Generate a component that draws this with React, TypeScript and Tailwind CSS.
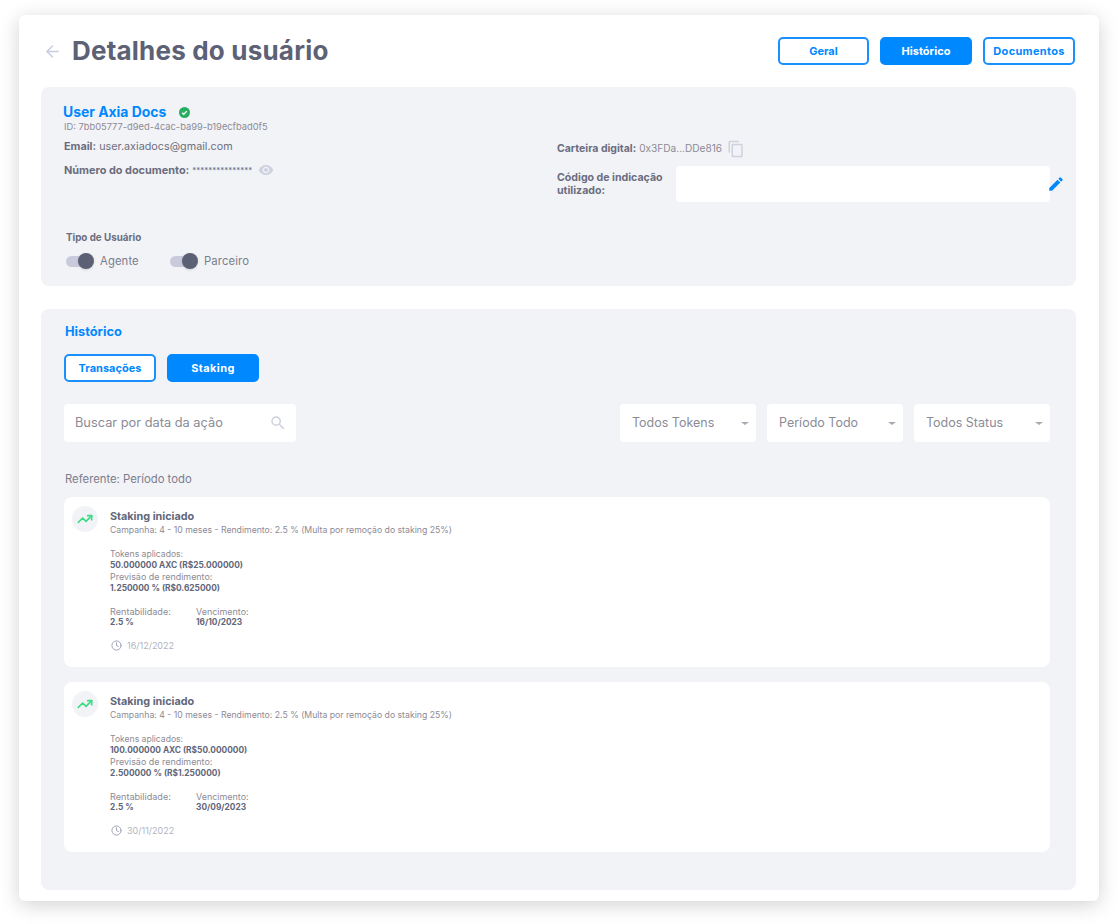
import React from "react";
import { ArrowLeft, Clock, TrendingUp } from "lucide-react";

const font = { fontFamily: '"Inter", "Noto Sans", sans-serif' };

function Btn({ label, active, w, size }: { label: string; active?: boolean; w: string; size: string }) {
  return (
    <button
      className={
        "h-[28px] rounded-[5px] border-2 border-[#1a90ff] text-[11px] font-bold flex items-center justify-center " +
        w +
        " " +
        size +
        " " +
        (active ? "bg-[#0088ff] text-white border-[#0088ff]" : "bg-white text-[#0088ff]")
      }
    >
      {label}
    </button>
  );
}

function Toggle({ label, w }: { label: string; w: string }) {
  return (
    <div className={"flex items-center " + w}>
      <div className="relative h-[11px] w-[24px] rounded-full bg-[#c9cbdc]">
        <div className="absolute -top-[2.5px] left-[12px] h-[16px] w-[16px] rounded-full bg-[#5b6074] shadow" />
      </div>
      <span className="ml-[10px] text-[11.3px] tracking-[0.1px] text-[#7b7d8c]">{label}</span>
    </div>
  );
}

function Select({ label }: { label: string }) {
  return (
    <div className="flex h-[38px] w-[136px] items-center justify-between rounded-[4px] bg-white pl-[12px] pr-[7px]">
      <span className="text-[12.5px] text-[#8b8b97]">{label}</span>
      <div className="h-0 w-0 border-x-[4px] border-t-[3px] border-x-transparent border-t-[#a9a9b3]" />
    </div>
  );
}

function Card({ tokens, forecast, due, date }: { tokens: string; forecast: string; due: string; date: string }) {
  return (
    <div className="flex h-[170px] w-[986px] rounded-[8px] bg-white pl-[8px] pt-[9px]">
      <div className="flex h-[26px] w-[26px] items-center justify-center rounded-full bg-[#f2f3f7]">
        <TrendingUp size={16} strokeWidth={2.5} className="text-[#3ddc84]" />
      </div>
      <div className="ml-[12px] text-[#8d8a95]">
        <div className="mt-[4px] text-[10.8px] leading-[14px] font-bold text-[#62667a]">Staking iniciado</div>
        <div className="text-[8.7px] leading-[12px]">
          Campanha: 4 - 10 meses - Rendimento: 2.5 % (Multa por remoção do staking 25%)
        </div>
        <div className="mt-[13px] text-[8.6px] leading-[10px]">Tokens aplicados:</div>
        <div className="mt-[1px] text-[8.35px] leading-[10px] font-bold text-[#62667a]">{tokens}</div>
        <div className="mt-[2px] text-[8.95px] leading-[10px]">Previsão de rendimento:</div>
        <div className="mt-[1px] text-[8.35px] leading-[10px] font-bold text-[#62667a]">{forecast}</div>
        <div className="mt-[14px] flex">
          <div className="w-[86px]">
            <div className="text-[9.1px] leading-[10px]">Rentabilidade:</div>
            <div className="text-[8.35px] leading-[10px] font-bold text-[#62667a]">2.5 %</div>
          </div>
          <div>
            <div className="text-[8.95px] leading-[10px]">Vencimento:</div>
            <div className="text-[8.35px] leading-[10px] font-bold text-[#62667a]">{due}</div>
          </div>
        </div>
        <div className="mt-[12px] flex items-center text-[9px] text-[#b3b4c0]">
          <Clock size={11} className="ml-[1px] text-[#9a9db3]" />
          <span className="ml-[5px]">{date}</span>
        </div>
      </div>
    </div>
  );
}

export default function App() {
  return (
    <div className="h-[924px] w-[1118px] bg-white pl-[19px] pt-[15px]" style={font}>
      <div className="h-[886px] w-[1080px] rounded-[6px] bg-white pl-[22px] pr-[23px] pt-[22px] shadow-[0_4px_20px_rgba(0,0,0,0.18)]">
        <div className="flex h-[28px] items-center justify-between">
          <div className="flex items-center">
            <ArrowLeft size={19} strokeWidth={1.8} className="ml-[2px] text-[#c9cce0]" />
            <h1 className="ml-[10px] text-[26px] leading-[28px] font-bold tracking-[0.2px] text-[#5c6175]">Detalhes do usuário</h1>
          </div>
          <div className="mr-[1px] flex gap-[11px]">
            <Btn label="Geral" w="w-[91px]" size="tracking-normal" />
            <Btn label="Histórico" active w="w-[92px]" size="tracking-normal" />
            <Btn label="Documentos" w="w-[92px]" size="tracking-[0.3px]" />
          </div>
        </div>

        <section className="mt-[22px] h-[199px] rounded-[8px] bg-[#f2f3f7] pl-[22px] pt-[17px]">
          <div className="flex">
            <div className="w-[494px]">
              <div className="flex items-center">
                <span className="text-[13.9px] leading-[16px] font-bold text-[#0088ff]">User Axia Docs</span>
                <svg viewBox="0 0 24 24" className="ml-[13px] h-[11px] w-[11px]">
                  <circle cx="12" cy="12" r="12" fill="#27ae60" />
                  <path d="M7 12.5l3.5 3.5L17 9" fill="none" stroke="#fff" strokeWidth="3" />
                </svg>
              </div>
              <div className="ml-[1px] text-[9.3px] leading-[14px] text-[#8d8a95]">ID: 7bb05777-d9ed-4cac-ba99-b19ecfbad0f5</div>
              <div className="ml-[1px] mt-[6px] text-[10.8px] leading-[14px] text-[#6d6f7e]">
                <b className="text-[#6b6d7f]">Email:</b> user.axiadocs@gmail.com
              </div>
              <div className="ml-[1px] mt-[8px] flex items-center text-[10.9px] leading-[14px] text-[#6b6d7f]">
                <b>Número do documento:</b>
                <span className="ml-[3px] text-[8px]">***************</span>
                <svg viewBox="0 0 24 24" className="ml-[6px] h-[16px] w-[16px]" fill="#cfd1e0">
                  <path d="M12 4.5C7 4.5 2.73 7.61 1 12c1.73 4.39 6 7.5 11 7.5s9.27-3.11 11-7.5c-1.73-4.39-6-7.5-11-7.5zM12 17c-2.76 0-5-2.24-5-5s2.24-5 5-5 5 2.24 5 5-2.24 5-5 5zm0-8c-1.66 0-3 1.34-3 3s1.34 3 3 3 3-1.34 3-3-1.34-3-3-3z" />
                </svg>
              </div>
            </div>
            <div className="flex-1 pt-[36px]">
              <div className="flex items-center text-[10.5px] text-[#6b6d7f]">
                <b>Carteira digital:</b>
                <span className="ml-[3px] text-[10.1px] text-[#8d8a95]">0x3FDa...DDe816</span>
                <svg viewBox="0 0 24 24" className="ml-[5px] h-[18px] w-[18px]" fill="#cfd1e0">
                  <path d="M16 1H4c-1.1 0-2 .9-2 2v14h2V3h12V1zm3 4H8c-1.1 0-2 .9-2 2v14c0 1.1.9 2 2 2h11c1.1 0 2-.9 2-2V7c0-1.1-.9-2-2-2zm0 16H8V7h11v14z" />
                </svg>
              </div>
              <div className="mt-[8px] flex items-center">
                <div className="w-[119px] text-[10.6px] leading-[13px] font-bold text-[#6b6d7f]">
                  Código de indicação
                  <br />
                  utilizado:
                </div>
                <div className="h-[36px] w-[374px] rounded-[4px] bg-white" />
                <svg viewBox="0 0 24 24" className="-ml-[3px] h-[18px] w-[18px]" fill="#0088ff">
                  <path d="M3 17.25V21h3.75L17.81 9.94l-3.75-3.75L3 17.25zM20.71 7.04a1 1 0 0 0 0-1.41l-2.34-2.34a1 1 0 0 0-1.41 0l-1.83 1.83 3.75 3.75 1.83-1.83z" />
                </svg>
              </div>
            </div>
          </div>
          <div className="ml-[3px] mt-[29px] text-[9.8px] leading-[14px] font-bold text-[#6b6d7f]">Tipo de Usuário</div>
          <div className="ml-[3px] mt-[8px] flex">
            <Toggle label="Agente" w="w-[104px]" />
            <Toggle label="Parceiro" w="" />
          </div>
        </section>

        <section className="mt-[23px] h-[581px] rounded-[8px] bg-[#f2f3f7] pl-[23px] pt-[15px]">
          <div className="ml-[1px] text-[12.8px] leading-[16px] font-bold text-[#0088ff]">Histórico</div>
          <div className="mt-[14px] flex gap-[11px]">
            <Btn label="Transações" w="w-[92px]" size="tracking-normal" />
            <Btn label="Staking" active w="w-[92px]" size="tracking-[0.4px]" />
          </div>
          <div className="mt-[22px] flex w-[986px] justify-between">
            <div className="flex h-[38px] w-[232px] items-center justify-between rounded-[4px] bg-white pl-[11px] pr-[9px]">
              <span className="text-[12.8px] text-[#8b8b97]">Buscar por data da ação</span>
              <svg viewBox="0 0 24 24" className="h-[18px] w-[18px]" fill="#cfd1e0">
                <path d="M15.5 14h-.79l-.28-.27A6.47 6.47 0 0 0 16 9.5 6.5 6.5 0 1 0 9.5 16c1.61 0 3.09-.59 4.23-1.57l.27.28v.79l5 4.99L20.49 19l-4.99-5zm-6 0C7.01 14 5 11.99 5 9.5S7.01 5 9.5 5 14 7.01 14 9.5 11.99 14 9.5 14z" />
              </svg>
            </div>
            <div className="flex gap-[11px]">
              <Select label="Todos Tokens" />
              <Select label="Período Todo" />
              <Select label="Todos Status" />
            </div>
          </div>
          <div className="ml-[1px] mt-[30px] text-[11.3px] leading-[14px] text-[#7b7d8c]">Referente: Período todo</div>
          <div className="mt-[11px] flex flex-col gap-[15px]">
            <Card tokens="50.000000 AXC (R$25.000000)" forecast="1.250000 % (R$0.625000)" due="16/10/2023" date="16/12/2022" />
            <Card tokens="100.000000 AXC (R$50.000000)" forecast="2.500000 % (R$1.250000)" due="30/09/2023" date="30/11/2022" />
          </div>
        </section>
      </div>
    </div>
  );
}
